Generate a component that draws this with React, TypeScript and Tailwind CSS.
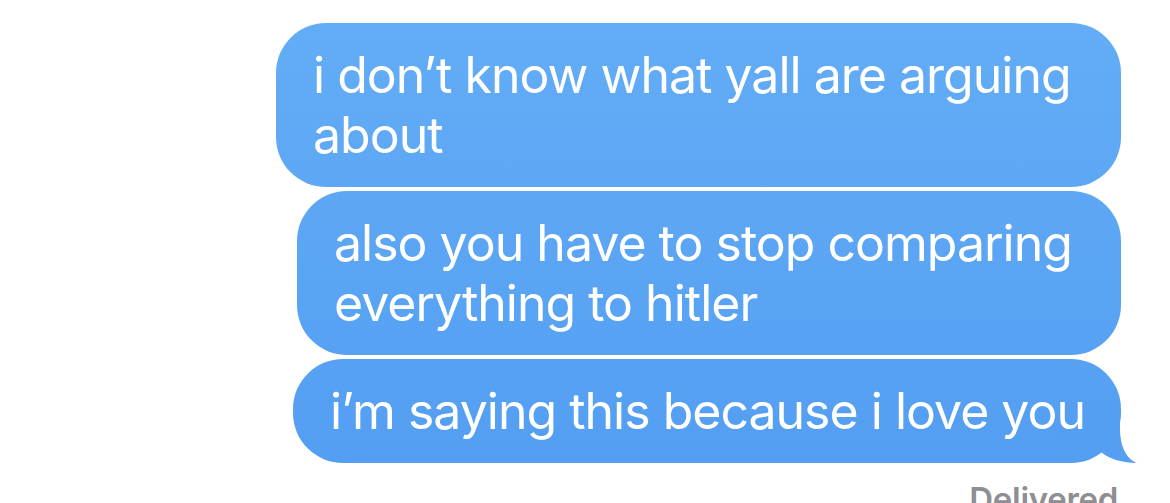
export default function App() {
  const bubble =
    "relative rounded-[50px] bg-linear-to-b from-[#64adf6] to-[#529df2] bg-fixed py-[22px] pl-[37px] text-[50px] leading-[60px] text-white tracking-[-1px]";
  return (
    <div
      className="min-h-[503px] w-[1170px] overflow-hidden bg-white"
      style={{ fontFamily: "Inter, 'Noto Sans', sans-serif" }}
    >
      <div className="flex flex-col items-end gap-[4px] pr-[49px] pt-[23px]">
        <div className={`${bubble} w-[845px]`}>
          i don’t know what yall are arguing
          <br />
          about
        </div>
        <div className={`${bubble} w-[824px]`}>
          also you have to stop comparing
          <br />
          everything to hitler
        </div>
        <div className={`${bubble} w-[828px]`}>
          {/* tail */}
          <svg
            className="absolute right-[-18px] bottom-0"
            width="80"
            height="63"
            viewBox="0 0 80 63"
          >
            <path
              d="M0 0 L61 0 L61 28 C61 48 68 59 78 63 C64 63 50 59 42 52 C32 60 16 63 0 63 Z"
              fill="#549ff2"
            />
          </svg>
          <span className="relative">i’m saying this because i love you</span>
        </div>
        <div className="mt-[12px] pr-[3px] text-[33px] font-semibold leading-[40px] tracking-[-0.3px] text-[#8e8e93]">
          Delivered
        </div>
      </div>
    </div>
  );
}
